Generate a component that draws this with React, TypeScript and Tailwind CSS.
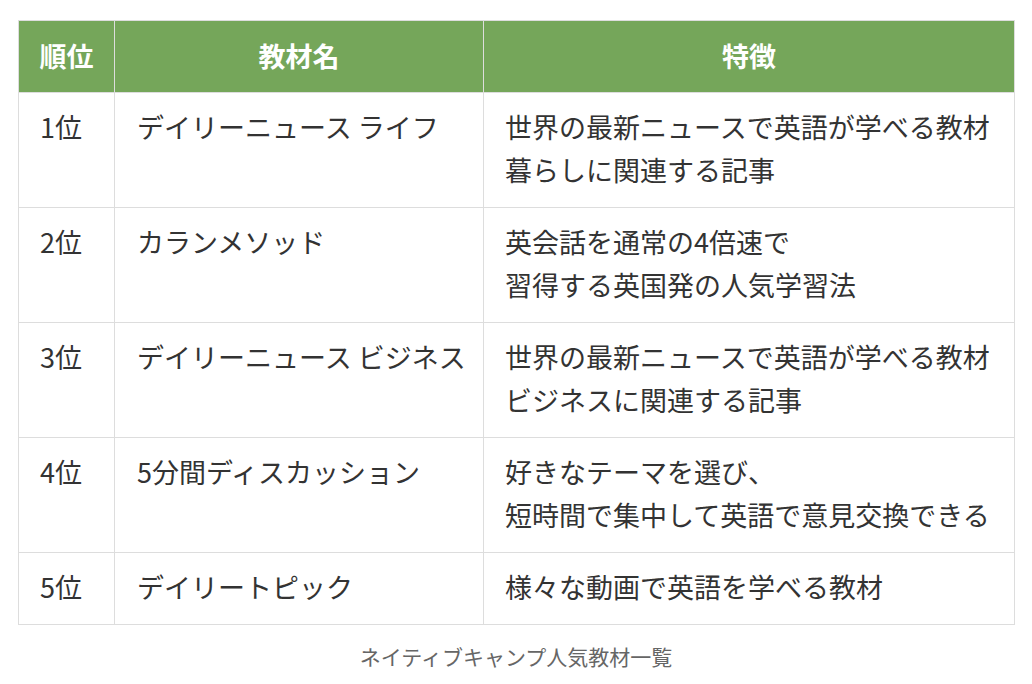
const rows = [
  { rank: "1位", name: "デイリーニュース ライフ", desc: ["世界の最新ニュースで英語が学べる教材", "暮らしに関連する記事"] },
  { rank: "2位", name: "カランメソッド", desc: ["英会話を通常の4倍速で", "習得する英国発の人気学習法"] },
  { rank: "3位", name: "デイリーニュース ビジネス", desc: ["世界の最新ニュースで英語が学べる教材", "ビジネスに関連する記事"] },
  { rank: "4位", name: "5分間ディスカッション", desc: ["好きなテーマを選び、", "短時間で集中して英語で意見交換できる"] },
  { rank: "5位", name: "デイリートピック", desc: ["様々な動画で英語を学べる教材"] },
];

export default function App() {
  return (
    <div
      className="min-h-[684px] bg-white pt-5 pl-[18px]"
      style={{ fontFamily: '"Noto Sans CJK JP", "Noto Sans", sans-serif' }}
    >
      <figure className="w-[996px]">
        <table className="w-full table-fixed border-collapse text-[27px] leading-[43px] text-[#333]">
          <colgroup>
            <col className="w-[96px]" />
            <col className="w-[369px]" />
            <col className="w-[531px]" />
          </colgroup>
          <thead>
            <tr className="bg-[#75a65a] text-white">
              <th className="border border-[#ddd] pt-[13px] pb-[15px] text-center font-bold">順位</th>
              <th className="border border-[#ddd] pt-[13px] pb-[15px] text-center font-bold">教材名</th>
              <th className="border border-[#ddd] pt-[13px] pb-[15px] text-center font-bold">特徴</th>
            </tr>
          </thead>
          <tbody>
            {rows.map((r) => (
              <tr key={r.rank}>
                <td className="border border-[#ddd] px-[21px] pt-[12px] pb-[16px] align-top">{r.rank}</td>
                <td className="whitespace-nowrap border border-[#ddd] pl-[22px] pr-[10px] pt-[12px] pb-[16px] align-top">
                  {r.name}
                </td>
                <td className="border border-[#ddd] px-[21px] pt-[12px] pb-[16px] align-top">
                  {r.desc.map((d) => (
                    <div key={d}>{d}</div>
                  ))}
                </td>
              </tr>
            ))}
          </tbody>
        </table>
        <figcaption className="mt-[17px] text-center text-[21px] leading-[28px] text-[#666]">
          ネイティブキャンプ人気教材一覧
        </figcaption>
      </figure>
    </div>
  );
}
